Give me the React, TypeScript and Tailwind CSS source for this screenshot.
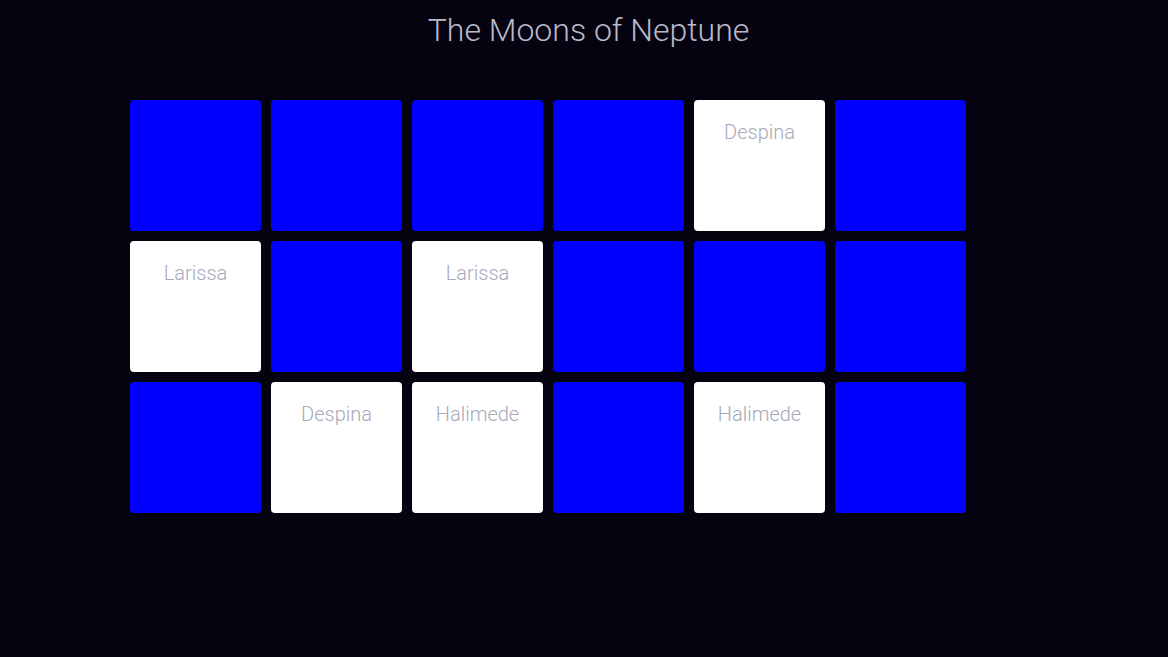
const moons: (string | null)[] = [
  null, null, null, null, "Despina", null,
  "Larissa", null, "Larissa", null, null, null,
  null, "Despina", "Halimede", null, "Halimede", null,
];

function Card({ name }: { name: string | null }) {
  if (!name) {
    return <div className="w-[131px] h-[131px] rounded-[4px] bg-[#0000ff]"></div>;
  }
  return (
    <div className="w-[131px] h-[131px] rounded-[4px] bg-white text-center pt-[19px]">
      <span className="text-[20px] leading-[26px] font-light text-[#a8a8ba]">{name}</span>
    </div>
  );
}

export default function App() {
  return (
    <div className="w-[1168px] h-[657px] bg-[#04030f] font-['Roboto',sans-serif] overflow-hidden">
      <h1 className="text-center text-[32px] font-light leading-[40px] pt-[10px] pl-[9px] text-[#b9b9c9]">
        The Moons of Neptune
      </h1>
      <div className="grid grid-cols-[repeat(6,131px)] gap-[10px] ml-[130px] mt-[50px]">
        {moons.map((m, i) => (
          <Card key={i} name={m} />
        ))}
      </div>
    </div>
  );
}
